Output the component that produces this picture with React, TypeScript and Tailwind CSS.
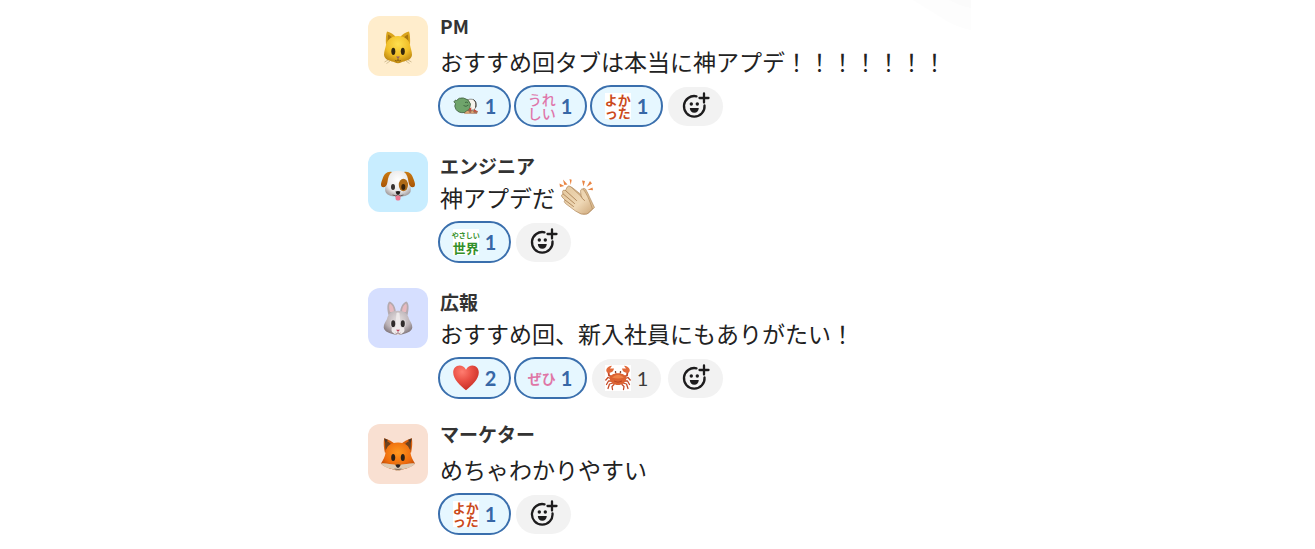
import type { ReactNode } from "react";

function CatFace() {
  return (
    <svg viewBox="0 0 60 60" className="size-full" aria-hidden="true">
      <defs>
        <radialGradient id="catFur" cx="0.5" cy="0.3" r="0.72">
          <stop offset="0" stopColor="#ffdf4f" />
          <stop offset="0.6" stopColor="#f0bd26" />
          <stop offset="1" stopColor="#b9830f" />
        </radialGradient>
      </defs>
      <path d="M18 29C17.600 23 18 18 19 15.500C22 16 26 18.500 28 21.500ZM42 29C42.400 23 42 18 41 15.500C38 16 34 18.500 32 21.500Z" fill="#d9a31c" />
      <path d="M19.500 27L20 18.500C22 19.500 24 21 25 22.500ZM40.500 27L40 18.500C38 19.500 36 21 35 22.500Z" fill="#a8760f" />
      <path d="M30 20C37 20 41 24 42 29C42.500 32 44 35 44 39C43.600 44.500 36 45 33.500 46.300Q30 48 26.500 46.300C24 45 16.400 44.500 16 39C16 35 17.500 32 18 29C19 24 23 20 30 20Z" fill="url(#catFur)" />
      <ellipse cx="25.300" cy="35.300" rx="2" ry="3.600" fill="#33270e" />
      <ellipse cx="34.800" cy="35.300" rx="2" ry="3.600" fill="#33270e" />
      <path d="M28 40.500H32L30 42.700Z" fill="#91606b" />
      <path d="M30 42.500V44M27 44.500Q28.500 45.500 30 44Q31.500 45.500 33 44.500" stroke="#7a5310" strokeWidth="0.800" fill="none" />
      <path d="M20 44L16.500 46M22 45L18.500 47.500M40 44L43.500 46M38 45L41.500 47.500" stroke="#a7915b" strokeWidth="0.500" />
    </svg>
  );
}

function DogFace() {
  return (
    <svg viewBox="0 0 60 60" className="size-full" aria-hidden="true">
      <defs>
        <radialGradient id="dogFur" cx="0.5" cy="0.35" r="0.65">
          <stop offset="0" stopColor="#ffffff" />
          <stop offset="0.7" stopColor="#e8e7e8" />
          <stop offset="1" stopColor="#aaa5a6" />
        </radialGradient>
        <linearGradient id="dogEar" x1="0" y1="0" x2="0" y2="1">
          <stop offset="0" stopColor="#ca7a12" />
          <stop offset="1" stopColor="#a95505" />
        </linearGradient>
      </defs>
      <path d="M30 18.800C38 18.800 41 23 41.500 30C42 34 43.500 36 42.500 40C41 44 34 44.700 30 45C26 44.700 19 44 17.500 40C16.500 36 18 34 18.500 30C19 23 22 18.800 30 18.800Z" fill="url(#dogFur)" />
      <path d="M24 20C19 19 16 22 14.500 27C13.300 30 12.300 32.500 13.500 34.500C15.500 36.500 19 34.500 19.500 30C20 26 21 22 24 20ZM36 20C41 19 44 22 45.500 27C46.700 30 47.700 32.500 46.500 34.500C44.500 36.500 41 34.500 40.500 30C40 26 39 22 36 20Z" fill="url(#dogEar)" />
      <ellipse cx="35.400" cy="33" rx="4.600" ry="6.200" fill="#ae6a17" />
      <ellipse cx="25" cy="35" rx="2" ry="3" fill="#37312f" />
      <ellipse cx="35.300" cy="35" rx="2" ry="3" fill="#37230d" />
      <path d="M27.500 43.500H32.500V46Q32.500 48.600 30 48.600T27.500 46Z" fill="#ee7993" />
      <path d="M24.500 43Q28 44.800 30 42.500Q32 44.800 35.500 43" stroke="#564a47" strokeWidth="0.800" fill="none" />
      <path d="M27.500 39.500Q30 38.300 32.500 39.500Q32 42.500 30 42.700Q28 42.500 27.500 39.500Z" fill="#211d1d" />
    </svg>
  );
}

function RabbitFace() {
  return (
    <svg viewBox="0 0 60 60" className="size-full" aria-hidden="true">
      <defs>
        <radialGradient id="rabbitFur" cx="0.5" cy="0.35" r="0.65">
          <stop offset="0" stopColor="#e4dfe0" />
          <stop offset="0.65" stopColor="#bcb3b7" />
          <stop offset="1" stopColor="#82787d" />
        </radialGradient>
      </defs>
      <path d="M20.500 27C18.800 21 19 15 21.500 13.500C25 14.500 28 19 28 26ZM39.500 27C41.200 21 41 15 38.500 13.500C35 14.500 32 19 32 26Z" fill="#b4aaae" />
      <path d="M22 24C20.800 20 21 16.500 22 15.500C24.500 17 26 20 26 24ZM38 24C39.200 20 39 16.500 38 15.500C35.500 17 34 20 34 24Z" fill="#e7b9bf" />
      <path d="M30 22.700C37 22.700 40 26 41 31C42 33 44.500 36 44.300 39.500C44 44 37 45.500 34.500 46.200Q30 47.800 25.500 46.200C23 45.500 16 44 15.700 39.500C15.500 36 18 33 19 31C20 26 23 22.700 30 22.700Z" fill="url(#rabbitFur)" />
      <path d="M28.500 25Q30 24 31.500 25L32.500 36Q38 40 36 44Q33 47 30 47T24 44Q22 40 27.500 36Z" fill="#eeeaeb" />
      <ellipse cx="25" cy="35.500" rx="3" ry="4.200" fill="#d8d2d4" />
      <ellipse cx="35" cy="35.500" rx="3" ry="4.200" fill="#d8d2d4" />
      <ellipse cx="25.200" cy="35.700" rx="2" ry="3.400" fill="#2f2b2b" />
      <ellipse cx="34.800" cy="35.700" rx="2" ry="3.400" fill="#2f2b2b" />
      <path d="M28 41.700H32L30 43.800Z" fill="#bf3d5b" />
      <path d="M30 43.500V45M27.500 45Q29 46.500 30 45Q31 46.500 32.500 45" stroke="#8e6870" strokeWidth="0.700" fill="none" />
    </svg>
  );
}

function FoxFace() {
  return (
    <svg viewBox="0 -2 60 60" className="size-full" aria-hidden="true">
      <defs>
        <radialGradient id="foxFur" cx="0.5" cy="0.35" r="0.7">
          <stop offset="0" stopColor="#ff981f" />
          <stop offset="0.6" stopColor="#ee6c0d" />
          <stop offset="1" stopColor="#a93c05" />
        </radialGradient>
      </defs>
      <path d="M17 27C15.500 21 15.500 15 16.200 12.200C20 13 25 16 28 19ZM43 27C44.500 21 44.500 15 43.800 12.200C40 13 35 16 32 19Z" fill="#d95f0c" />
      <path d="M17.500 24Q16.700 17 17.300 14.300Q21 15.500 23.500 18.500ZM42.500 24Q43.300 17 42.700 14.300Q39 15.500 36.500 18.500Z" fill="#6e421f" />
      <path d="M16.200 12.200L17.200 17L20 14ZM43.800 12.200L42.800 17L40 14Z" fill="#49372a" />
      <path d="M30 16.500C38 16.500 41.500 20 42.500 27C43 31 45 34 47 37.500C42 42.500 35 43 30 45C25 43 18 42.500 13 37.500C15 34 17 31 17.500 27C18.500 20 22 16.500 30 16.500Z" fill="url(#foxFur)" />
      <path d="M13 37.500C18 36.500 24 39 28 38.500H32C36 39 42 36.500 47 37.500C43 42.500 36 42.500 30 45C24 42.500 17 42.500 13 37.500Z" fill="#dccab4" />
      <path d="M26.500 38Q30 34.500 33.500 38L32 40H28Z" fill="#e1771a" />
      <ellipse cx="25.200" cy="31.500" rx="2" ry="3.600" fill="#2b2018" />
      <ellipse cx="34.800" cy="31.500" rx="2" ry="3.600" fill="#2b2018" />
      <path d="M27.500 38.800Q30 37.500 32.500 38.800Q32 41.500 30 42Q28 41.500 27.500 38.800Z" fill="#292323" />
      <path d="M26.500 43Q30 44 33.500 43" stroke="#6b513f" strokeWidth="0.800" fill="none" />
    </svg>
  );
}

function ClappingHands() {
  return (
    <svg viewBox="0 0 36 36" className="size-9 shrink-0" role="img" aria-label="拍手">
      <defs>
        <linearGradient id="clapSkin" x1="0" y1="0" x2="1" y2="1">
          <stop offset="0" stopColor="#e3c69b" />
          <stop offset="0.6" stopColor="#efd8b6" />
          <stop offset="1" stopColor="#cda779" />
        </linearGradient>
      </defs>
      <path d="M10 8.500Q11.500 7 13.200 8.500L24 17L23 11.500Q23.500 8 26.500 10Q29 14 31 19L35.500 28.500L29 34.500Q25 36.500 19 33L9 24L12 20Z" fill="#dcbd91" stroke="#ad875c" strokeWidth="0.600" />
      <path d="M8.200 8Q9.700 5.700 12 8L22.200 17.500L21.500 12.200Q22 8.700 25 11C28 16 29.500 19 31 23L33.500 30L28 35Q22 36.500 16.500 32L6.500 24.500Q4.300 22.500 6 21L3 18Q1.500 16 4 14.800L3.500 12.500Q4 10.300 6.500 11.500Z" fill="url(#clapSkin)" stroke="#b18b60" strokeWidth="0.700" />
      <path d="M6.500 11.500L17.500 21.500M4 14.800L15.500 24.500M6 21L14.500 27.500M22.200 17.500Q23 20 25.500 21.500" stroke="#aa8155" strokeWidth="0.900" fill="none" strokeLinecap="round" />
      <path d="M0.500 4.500L5.300 7L1 8ZM4 0.500L8.500 5.500L5.300 6ZM10.500 0L12.700 0.700L11.700 6ZM23 1.500L26 2L24.500 7.500ZM31 2L33 4.500L27.500 8ZM33.500 8.500L34 11.300L28.500 10.700Z" fill="#e98543" />
    </svg>
  );
}

function RestingBird() {
  return (
    <svg viewBox="0 0 26 26" className="size-[26px]" role="img" aria-label="おつかれ">
      <path d="M11 16L25 18L24 20.800L11 20.500Z" fill="#a77257" />
      <path d="M14 7Q20 4.500 22.800 9Q24.700 14 21 17L14 17Z" fill="#f7f4ec" stroke="#54534b" strokeWidth="0.600" />
      <path d="M20.500 6.500Q24 9 22.500 14.500" stroke="#403f3a" strokeWidth="1" fill="none" />
      <path d="M2.500 7L0.800 9L2.500 10.500Q0.800 13 3 16.500Q6 20.500 11.500 19.500L16.500 16L17.500 11Q16 6 10.500 5Q5.500 4.300 3.500 7.500Z" fill="#6fa46b" stroke="#405d40" strokeWidth="0.800" />
      <path d="M10.500 12.500Q13 14.500 15.500 12M12 9.500Q14 8.500 15 10" stroke="#365b38" strokeWidth="0.800" fill="none" />
      <path d="M15.500 16L18.500 14.500L17.500 18.500ZM21 16L24.500 18.500H21Z" fill="#c84636" />
      <path d="M12.500 19L15 17.500L17 20.500H12ZM19 17L21 20H18Z" fill="#dba673" />
    </svg>
  );
}

function Heart() {
  return (
    <svg viewBox="0 0 26 26" className="size-[26px]" role="img" aria-label="ハート">
      <defs>
        <radialGradient id="heartRed" cx="0.35" cy="0.25" r="0.75">
          <stop offset="0" stopColor="#ff7d70" />
          <stop offset="0.5" stopColor="#ea5045" />
          <stop offset="1" stopColor="#c93028" />
        </radialGradient>
      </defs>
      <path d="M13 4.700C11.500 1.700 9 0.500 6.600 0.500C2.800 0.500 0.200 3.400 0.200 7.500C0.200 14.500 7.500 20.500 13 25.200C18.500 20.500 25.800 14.500 25.800 7.500C25.800 3.400 23.200 0.500 19.400 0.500C17 0.500 14.500 1.700 13 4.700Z" fill="url(#heartRed)" />
    </svg>
  );
}

function Crab() {
  return (
    <svg viewBox="0 0 26 26" className="size-[26px] bg-white" role="img" aria-label="かに">
      <g stroke="#c64b28" strokeWidth="1.300" fill="none" strokeLinecap="round" strokeLinejoin="round">
        <path d="M7.500 12L4 10.500L3.500 7M18.500 12L22 10.500L22.500 7" strokeWidth="1.800" />
        <path d="M7 14L3 12.500L0.800 15M19 14L23 12.500L25.200 15M7 16L3.500 16L1.500 19.500M19 16L22.500 16L24.500 19.500M8 18L4.500 19L3 23.500M18 18L21.500 19L23 23.500M9 19.500L7 21.500L7.500 24.500M17 19.500L19 21.500L18.500 24.500" />
        <path d="M11 9L10.500 6.500M15 9L15.500 6.500" strokeWidth="0.800" />
      </g>
      <path d="M3.500 8Q0.500 7 1.500 4Q3 1 7 0.800L5 3.500L9 3.500Q8.500 7.500 3.500 8ZM22.500 8Q25.500 7 24.500 4Q23 1 19 0.800L21 3.500L17 3.500Q17.500 7.500 22.500 8Z" fill="#e2693a" />
      <path d="M13 8.200C17.500 8.200 21.500 10.500 21.500 13C21 17.500 17 20 13 20S5 17.500 4.500 13C4.500 10.500 8.500 8.200 13 8.200Z" fill="#dc6231" />
      <path d="M7 12.500Q13 7 19 12.500Q13 14.500 7 12.500Z" fill="#ee8248" />
      <path d="M9 16Q13 18.500 17 16" stroke="#ab3b20" strokeWidth="0.700" fill="none" />
      <circle cx="10.500" cy="7" r="0.800" fill="#5a2a1c" />
      <circle cx="15.500" cy="7" r="0.800" fill="#5a2a1c" />
    </svg>
  );
}

function Ureshii() {
  return (
    <span className="-mx-px w-7 text-[14px] leading-[14px] font-medium break-all text-[#df76aa]">
      うれしい
    </span>
  );
}

function Yokatta() {
  return (
    <span className="w-[26px] bg-white text-[13px] leading-[13px] font-bold break-all text-[#cb4a1b]">
      よかった
    </span>
  );
}

function YasashiiSekai() {
  return (
    <span className="flex h-[26px] w-[26px] flex-col items-center justify-center bg-white font-bold whitespace-nowrap text-[#33902a]">
      <span className="text-[7px] leading-[12px]">やさしい</span>
      <span className="text-[13px] leading-[14px]">世界</span>
    </span>
  );
}

function Zehi() {
  return (
    <span className="-mx-px w-7 text-[14px] leading-[26px] font-bold whitespace-nowrap text-[#df76a6]">
      ぜひ
    </span>
  );
}

function AddReactionIcon() {
  return (
    <svg viewBox="0 0 28 28" className="size-7" fill="none" aria-hidden="true">
      <path d="M14.500 4.300A10.300 10.300 0 1 0 22.500 13.300" stroke="#1d1c1d" strokeWidth="2.300" strokeLinecap="round" />
      <path d="M22 1.500V10.500M17.500 6H26.500" stroke="#1d1c1d" strokeWidth="2.300" strokeLinecap="round" />
      <circle cx="9.300" cy="12" r="1.700" fill="#1d1c1d" />
      <circle cx="15.300" cy="12" r="1.700" fill="#1d1c1d" />
      <path d="M7.800 16H16.800C16.500 19 15 20.700 12.300 20.700S8 19 7.800 16Z" fill="#1d1c1d" />
    </svg>
  );
}

type Reaction = { icon: ReactNode; count: number; mine: boolean };

type Post = {
  name: string;
  nameAlign: string;
  avatar: ReactNode;
  avatarColor: string;
  text: string;
  trailing?: ReactNode;
  reactions: Reaction[];
};

const posts: Post[] = [
  {
    name: "PM",
    nameAlign: "items-start",
    avatar: <CatFace />,
    avatarColor: "bg-[#ffedcc]",
    text: "おすすめ回タブは本当に神アプデ！！！！！！！",
    reactions: [
      { icon: <RestingBird />, count: 1, mine: true },
      { icon: <Ureshii />, count: 1, mine: true },
      { icon: <Yokatta />, count: 1, mine: true },
    ],
  },
  {
    name: "エンジニア",
    nameAlign: "items-end",
    avatar: <DogFace />,
    avatarColor: "bg-[#c8edff]",
    text: "神アプデだ",
    trailing: <ClappingHands />,
    reactions: [{ icon: <YasashiiSekai />, count: 1, mine: true }],
  },
  {
    name: "広報",
    nameAlign: "items-end",
    avatar: <RabbitFace />,
    avatarColor: "bg-[#d6dfff]",
    text: "おすすめ回、新入社員にもありがたい！",
    reactions: [
      { icon: <Heart />, count: 2, mine: true },
      { icon: <Zehi />, count: 1, mine: true },
      { icon: <Crab />, count: 1, mine: false },
    ],
  },
  {
    name: "マーケター",
    nameAlign: "items-start",
    avatar: <FoxFace />,
    avatarColor: "bg-[#f9e0d2]",
    text: "めちゃわかりやすい",
    reactions: [{ icon: <Yokatta />, count: 1, mine: true }],
  },
];

function ReactionButton({ icon, count, mine }: Reaction) {
  const look = mine
    ? "h-[42px] w-[73px] border-2 border-[#3a6fad] bg-[#e6f7ff] font-bold text-[#3767a6]"
    : "mx-[2px] h-[39px] w-[69px] bg-[#f2f2f2] text-[#3c3c3c]";
  return (
    <button type="button" className={`flex items-center justify-center gap-1.5 rounded-full ${look}`}>
      {icon}
      <span className="font-['Lato','Noto_Sans_CJK_JP',sans-serif] text-[20px] leading-6">{count}</span>
    </button>
  );
}

function PostItem({ post }: { post: Post }) {
  return (
    <article className="flex gap-2.5">
      <div className={`size-[60px] shrink-0 overflow-hidden rounded-xl ${post.avatarColor}`}>{post.avatar}</div>
      <div className="min-w-0 flex-1">
        <h2 className={`flex h-6 pl-[2px] text-[19px] leading-5 font-bold text-[#333333] ${post.nameAlign}`}>{post.name}</h2>
        <div className="mt-[5px] flex min-h-8 items-center gap-1 pl-[2px]">
          <p className="text-[23px] leading-8 text-[#222222]">{post.text}</p>
          {post.trailing && <span className="-my-1 flex">{post.trailing}</span>}
        </div>
        <div className="mt-2 flex flex-wrap items-center gap-[3px]">
          {post.reactions.map((reaction, index) => (
            <ReactionButton key={index} {...reaction} />
          ))}
          <button
            type="button"
            aria-label="リアクションを追加"
            className="mx-[2px] flex h-[39px] w-[55px] items-center justify-center rounded-full bg-[#f2f2f2]"
          >
            <AddReactionIcon />
          </button>
        </div>
      </div>
    </article>
  );
}

export default function App() {
  return (
    <div className="min-h-screen overflow-hidden bg-white font-['Noto_Sans_CJK_JP',sans-serif]">
      <main className="relative mx-auto flex max-w-[579px] flex-col gap-[25px] py-4 pb-3">
        <svg viewBox="0 0 58 30" className="absolute top-0 -right-6 h-[30px] w-[58px]" aria-hidden="true">
          <path d="M0 0H58V30Q46 28 34 21Z" fill="#fdfdfd" />
          <path d="M36 0H58V8Q48 6 36 0Z" fill="#fbfbfb" />
        </svg>
        {posts.map((post) => (
          <PostItem key={post.name} post={post} />
        ))}
      </main>
    </div>
  );
}
